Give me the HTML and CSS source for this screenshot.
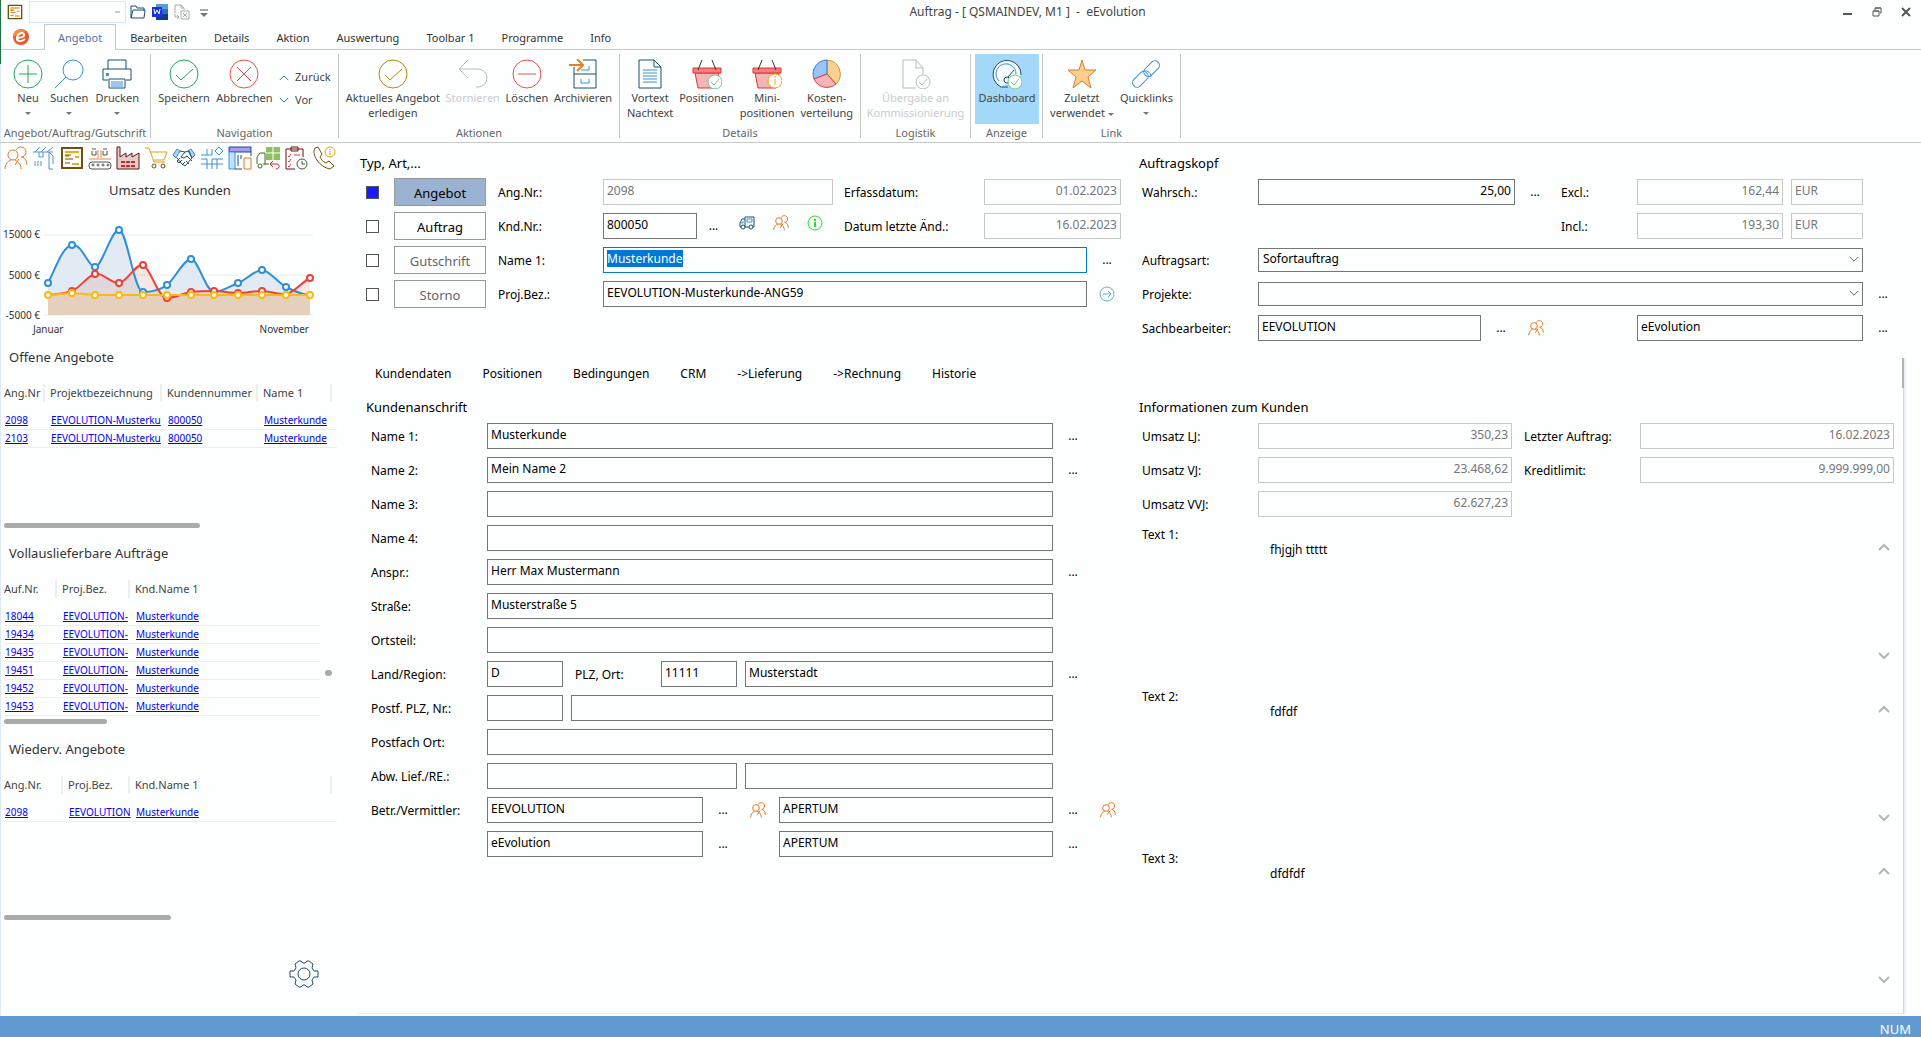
FILE: index.html
```html
<!DOCTYPE html>
<html lang="de">
<head>
  <meta charset="UTF-8">
  <meta name="viewport" content="width=device-width, initial-scale=1.0">
  <title>Auftrag - [ QSMAINDEV, M1 ] - eEvolution</title>
  <link rel="stylesheet" href="styles.css">
</head>
<body>
  <!-- Shared icons -->
  <svg class="sprite" aria-hidden="true">
    <symbol id="people" viewBox="0 0 24 24">
      <circle cx="9" cy="9" r="5"/><path d="M1 23c0-5 3-8 6-9M11 14c4 2 6 5 6 9M12 4c1-2 3-3 5-3 3 0 5 2 5 5s-2 5-5 5M18 11c3 1 5 4 5 8M15 13l-4 6"/>
    </symbol>
    <symbol id="form" viewBox="0 0 24 24">
      <path d="M2 2h20v20H2z" stroke="#6b5010" stroke-width="2"/><path d="M5 6h14M15 11h4M12 18h7M5 10h4" stroke="#f5a623" stroke-width="2"/><path d="M5 9h6M5 13h8M5 17h5" stroke="#6b5010"/>
    </symbol>
    <symbol id="basket" viewBox="0 0 30 30">
      <path d="M3 14h24l-3 15H6z" fill="#f3b5b5" stroke="#e03030"/><path d="M1 9h28v5H1z" fill="#f08080" stroke="#e03030"/><path d="M10 1L6 11M20 1l4 10" stroke="#333"/>
    </symbol>
    <symbol id="down" viewBox="0 0 12 8"><path d="M1 1l5 5 5-5"/></symbol>
    <symbol id="up" viewBox="0 0 12 8"><path d="M1 7l5-5 5 5"/></symbol>
  </svg>

  <header class="titlebar">
    <div class="quick">
      <svg class="icon16"><use href="#form"/></svg>
      <select class="quick-select" aria-label="Schnellauswahl"><option></option></select>
      <button class="plain" aria-label="Öffnen"><svg class="icon16" viewBox="0 0 16 16"><path d="M1 14V2h5l1 2h7v3M1 14h13l1-8H3z" stroke="#1b5266"/></svg></button>
      <button class="plain" aria-label="Word"><svg class="icon16" viewBox="0 0 16 16"><path fill="#5b9bd5" d="M4 0h12v5H4z"/><path fill="#2b6cc8" d="M4 5h12v5H4z"/><path fill="#123c88" d="M4 10h12v6H4z"/><path fill="#1733e6" d="M0 3h10v10H0z"/><path d="M2 5l1 5 2-4 2 4 1-5" stroke="#fff"/></svg></button>
      <button class="plain" aria-label="Export"><svg class="icon16" viewBox="0 0 16 16" stroke="#aaa"><path d="M1 9V1h6l3 3v2M7 1v3h3M7 7h8v8H7zM9 9l4 4M13 9l-4 4M1 10v3h4M3 11l2 2-2 2"/></svg></button>
      <button class="plain" aria-label="Anpassen"><svg class="icon16" viewBox="0 0 16 16"><path d="M4 6h8" stroke="#555"/><path d="M4 9h8l-4 4z" fill="#777"/></svg></button>
    </div>
    <h1 class="window-title">Auftrag - [ QSMAINDEV, M1 ] &nbsp;-&nbsp; eEvolution</h1>
    <div class="window-buttons">
      <button class="plain" aria-label="Minimieren"><svg viewBox="0 0 10 10"><path d="M0 7h9" stroke="#555" stroke-width="2"/></svg></button>
      <button class="plain" aria-label="Wiederherstellen"><svg viewBox="0 0 10 10"><path d="M1 4h6v5H1zM3 3V1h6v5H8M3 1h6M1 4h6" stroke="#555"/></svg></button>
      <button class="plain" aria-label="Schließen"><svg viewBox="0 0 10 10"><path d="M1 1l8 8M9 1L1 9" stroke="#555" stroke-width="2"/></svg></button>
    </div>
  </header>

  <nav class="tabs">
    <svg class="logo" viewBox="0 0 18 18"><circle cx="9" cy="9" r="8" fill="#e8562a"/><path d="M1 9a8 8 0 0 1 13-6z" fill="#f0913a"/><path d="M5 10c5 0 8-2 7-4s-6-1-7 3 3 6 8 2" stroke="#fff" stroke-width="2"/></svg>
    <a class="tab active" href="#">Angebot</a>
    <a class="tab" href="#">Bearbeiten</a>
    <a class="tab" href="#">Details</a>
    <a class="tab" href="#">Aktion</a>
    <a class="tab" href="#">Auswertung</a>
    <a class="tab" href="#">Toolbar 1</a>
    <a class="tab" href="#">Programme</a>
    <a class="tab" href="#">Info</a>
  </nav>

  <div class="ribbon">
    <section class="group group-doc">
      <div class="group-items">
        <button class="tool"><svg viewBox="0 0 30 30" stroke="#21a95a"><circle cx="15" cy="15" r="14"/><path d="M15 6v18M6 15h18"/></svg>Neu<i class="caret"></i></button>
        <button class="tool"><svg viewBox="0 0 30 30" stroke="#3b8fd6"><circle cx="19" cy="11" r="10"/><path d="M12 18L1 29"/></svg>Suchen<i class="caret"></i></button>
        <button class="tool"><svg viewBox="0 0 30 30" stroke="#1b5266"><path d="M6 10V1h18v9M6 21H1V10h28v11h-5M7 20h16v9H7z"/><path d="M9 23h12M9 25h12M9 27h12" stroke="#3b8fd6"/><path d="M4 14h3v3H4z" fill="#3b8fd6" stroke="none"/></svg>Drucken<i class="caret"></i></button>
      </div>
      <h2 class="group-name">Angebot/Auftrag/Gutschrift</h2>
    </section>
    <section class="group group-nav">
      <div class="group-items">
        <button class="tool"><svg viewBox="0 0 30 30" stroke="#21a95a"><circle cx="15" cy="15" r="14"/><path d="M7 16l5 5L24 10"/></svg>Speichern</button>
        <button class="tool"><svg viewBox="0 0 30 30" stroke="#e8504a"><circle cx="15" cy="15" r="14"/><path d="M8 8l14 14M22 8L8 22"/></svg>Abbrechen</button>
        <div class="steps">
          <button class="step"><svg><use href="#up"/></svg>Zurück</button>
          <button class="step"><svg><use href="#down"/></svg>Vor</button>
        </div>
      </div>
      <h2 class="group-name">Navigation</h2>
    </section>
    <section class="group group-actions">
      <div class="group-items">
        <button class="tool"><svg viewBox="0 0 30 30" stroke="#b8860b"><circle cx="15" cy="15" r="14"/><path d="M7 16l5 5L24 10"/></svg>Aktuelles Angebot<br>erledigen</button>
        <button class="tool" disabled><svg viewBox="0 0 30 30" stroke="#bbb"><path d="M10 1L1 10l9 9M1 10h19a9 9 0 0 1 0 18h-2" /></svg>Stornieren</button>
        <button class="tool"><svg viewBox="0 0 30 30" stroke="#e8504a"><circle cx="15" cy="15" r="14"/><path d="M6 15h18"/></svg>Löschen</button>
        <button class="tool"><svg viewBox="0 0 30 30" stroke="#1b5266"><path d="M6 8v21h22V1H15M6 15h22"/><path d="M13 20v4h8v-4M21 7v4h-8" stroke="#3b8fd6"/><path d="M1 6h14M9 0l6 6-6 6" stroke="#e67e22" stroke-width="2"/></svg>Archivieren</button>
      </div>
      <h2 class="group-name">Aktionen</h2>
    </section>
    <section class="group group-details">
      <div class="group-items">
        <button class="tool"><svg viewBox="0 0 30 30" stroke="#1b5266"><path d="M4 1h15l7 7v21H4zM19 1v7h7"/><path d="M8 11h14M8 14h14M8 17h14M8 20h14M8 23h14" stroke="#3b8fd6"/></svg>Vortext<br>Nachtext</button>
        <button class="tool"><svg viewBox="0 0 30 30"><use href="#basket"/><circle cx="23" cy="23" r="7" fill="#fff" stroke="#6cc98a"/><path d="M19 23l3 3 5-6" stroke="#6cc98a"/></svg>Positionen</button>
        <button class="tool"><svg viewBox="0 0 30 30"><use href="#basket"/><circle cx="23" cy="22" r="7" fill="#fff" stroke="#f0a818"/><path d="M23 20v6M23 17v2" stroke="#f0a818"/></svg>Mini-<br>positionen</button>
        <button class="tool"><svg viewBox="0 0 30 30"><path d="M15 15V1a14 14 0 0 1 9 24z" fill="#f8d28c" stroke="#e08a3c"/><path d="M15 15L2 20A14 14 0 0 1 15 1z" fill="#9cc4f8" stroke="#2b7fd0"/><path d="M15 15l9 10a14 14 0 0 1-22-5z" fill="#f3b5b5" stroke="#e03c3c"/></svg>Kosten-<br>verteilung</button>
      </div>
      <h2 class="group-name">Details</h2>
    </section>
    <section class="group group-logistics">
      <div class="group-items">
        <button class="tool" disabled><svg viewBox="0 0 30 30" stroke="#bbb"><path d="M15 29H2V1h13l7 8v6M15 1v8h7"/><circle cx="22" cy="23" r="7"/><path d="M18 23l3 3 5-6"/></svg>Übergabe an<br>Kommissionierung</button>
      </div>
      <h2 class="group-name">Logistik</h2>
    </section>
    <section class="group group-view">
      <div class="group-items">
        <button class="tool pressed"><svg viewBox="0 0 30 30" stroke="#1b5266"><path d="M9 28a14 14 0 1 1 20-12M9 28h7" fill="#f4fafd"/><path d="M7 22a10 10 0 1 1 17-7" stroke="#3b8fd6"/><circle cx="15" cy="21" r="3"/><path d="M16 18l6-7"/><circle cx="23" cy="23" r="7" fill="#fff" stroke="#6cc98a"/><path d="M19 23l3 3 5-6" stroke="#6cc98a"/></svg>Dashboard</button>
      </div>
      <h2 class="group-name">Anzeige</h2>
    </section>
    <section class="group group-links">
      <div class="group-items">
        <button class="tool"><svg viewBox="0 0 30 30"><path d="M15 1l3 10h11l-8 7 3 11-9-7-9 7 3-11-8-7h11z" fill="#f9d08a" stroke="#e07b2a"/></svg>Zuletzt<br>verwendet <i class="caret"></i></button>
        <button class="tool"><svg viewBox="0 0 30 30" stroke="#3b8fd6"><rect x="12" y="5" width="18" height="9" rx="4" transform="rotate(-45 21 10)"/><rect x="0" y="16" width="18" height="9" rx="4" transform="rotate(-45 9 20)"/><path d="M11 13c4-3 9 0 9 5"/></svg>Quicklinks<i class="caret"></i></button>
      </div>
      <h2 class="group-name">Link</h2>
    </section>
  </div>

  <div class="workspace">
    <aside class="sidebar">
      <div class="shortcuts">
        <button class="plain" aria-label="Kunden"><svg class="orange"><use href="#people"/></svg></button>
        <button class="plain" aria-label="Kran"><svg viewBox="0 0 24 24" stroke="#5b93cc"><path d="M1 6h20M3 6l5-5M9 6l5-5M15 6l6-5M7 6v5h4V6M17 6v17h4M17 6l4 4v8M3 15v5M6 15v5M9 15v5"/></svg></button>
        <button class="plain" aria-label="Belege"><svg><use href="#form"/></svg></button>
        <button class="plain" aria-label="Produktion"><svg viewBox="0 0 24 24" stroke="#555"><rect x="1" y="16" width="22" height="7" rx="3"/><circle cx="5" cy="19" r="1"/><circle cx="10" cy="19" r="1"/><circle cx="15" cy="19" r="1"/><circle cx="20" cy="19" r="1"/><path d="M4 5v4h4V5M15 5v4h4V5M4 3h4M15 3h4"/><path d="M1 13h22M10 4v8M13 4v8" stroke="#e08a4c"/></svg></button>
        <button class="plain" aria-label="Fertigung"><svg viewBox="0 0 24 24"><path d="M1 23V1h3v10l6-4v4l6-4v4l7-4v16z" fill="#e3cccc" stroke="#6b1010"/><path d="M5 16h15M5 20h15" stroke="#c8281e" stroke-width="2" stroke-dasharray="4 1"/></svg></button>
        <button class="plain" aria-label="Einkauf"><svg viewBox="0 0 24 24" stroke="#e5a00d"><path d="M1 2h4l5 14h11M6 6h17l-3 8H9"/><circle cx="10" cy="20" r="2" stroke="#6b5010"/><circle cx="19" cy="20" r="2" stroke="#6b5010"/></svg></button>
        <button class="plain" aria-label="Partner"><svg viewBox="0 0 24 24" stroke="#1b5266"><path d="M1 9l4-6 3 2-4 7zM23 9l-4-6-3 2 4 7z" fill="#a6d4ee" stroke="#3b8fd6"/><path d="M8 5l5 1 4-1 3 7-7 8-3-2-5-6M13 6l-4 5 3 1 3-2 5 5M8 12l-3 3 2 2M7 17l3-3M10 19l3-3M14 15l3 3"/></svg></button>
        <button class="plain" aria-label="Lager"><svg viewBox="0 0 24 24" stroke="#3b8fd6"><path d="M7 3v6H1M12 3v6H7M1 13h6v10M12 23V13h11M12 18h11M17 13v10M1 18h6M12 18H7"/><path d="M19 1l4 4-4 4-4-4z"/></svg></button>
        <button class="plain" aria-label="Planung"><svg viewBox="0 0 24 24"><path d="M1 1h22v5H1z" fill="#a99cf0" stroke="#1b4a8c"/><path d="M1 6h6v17H1z" fill="#bfe4fa" stroke="#3b8fd6"/><path d="M23 6v4M7 23h7M10 9v11M13 9v4" stroke="#1b4a8c"/><path d="M16 12h7v11h-7z" stroke="#e07b2a"/></svg></button>
        <button class="plain" aria-label="Lieferung"><svg viewBox="0 0 24 24"><path d="M10 1h14v13H10z" fill="#8cc063"/><path d="M10 7h14M17 1v13" stroke="#fff"/><path d="M1 18v-7l3-4h5v12M7 18h6" stroke="#4a6b2a"/><circle cx="4" cy="20" r="2" stroke="#4a6b2a"/><path d="M14 18h7c3 0 3 5-1 5M17 15l-3 3 3 3" stroke="#c8281e"/></svg></button>
        <button class="plain" aria-label="Aufgaben"><svg viewBox="0 0 24 24" stroke="#6b1010"><path d="M11 23H2V3h17v8M7 1h7v4H7z"/><path d="M4 10l1 1 2-3M4 15l1 1 2-3M4 20l1 1 2-3M10 9h6" stroke="#e03c3c"/><circle cx="18" cy="18" r="5" stroke="#3f5d2c"/><path d="M18 15v3h3" stroke="#3f5d2c"/></svg></button>
        <button class="plain" aria-label="Telefon"><svg viewBox="0 0 24 24" stroke="#7a4f14"><path d="M3 2c-4 6 4 19 15 21l4-3-5-5-3 2c-3-1-5-4-6-6l2-3-4-7z"/><circle cx="18" cy="6" r="5" stroke="#e5a00d"/><path d="M18 3v1M18 5v4" stroke="#e5a00d"/></svg></button>
      </div>

      <h2 class="chart-title">Umsatz des Kunden</h2>
      <svg class="chart" viewBox="0 0 340 140" role="img" aria-label="Umsatz des Kunden">
        <path class="grid" d="M44 35h269M44 75h269M44 115h269"/>
        <path fill="#e2ebf4" d="M48 83C56 68 62 47 72 45S88 67 95 67S111 30 119 30S134 92 143 92S160 90 167 85S184 59 191 59S206 92 214 92S230 86 238 83S255 70 262 70S278 83 286 87S302 95 310 95V115H48z"/>
        <path fill="#c86450" fill-opacity=".14" d="M48 95C56 94 64 94 72 91S87 76 95 74S111 84 119 83S136 63 143 65S158 98 167 98S183 93 191 92S206 91 214 91S230 93 238 93S254 91 262 91S278 95 286 94S302 82 310 78V95z"/>
        <path fill="#e5d0bd" d="M48 95h262v20H48z"/>
        <g class="blue">
          <path d="M48 83C56 68 62 47 72 45S88 67 95 67S111 30 119 30S134 92 143 92S160 90 167 85S184 59 191 59S206 92 214 92S230 86 238 83S255 70 262 70S278 83 286 87S302 95 310 95"/>
          <circle cx="48" cy="83" r="3"/><circle cx="72" cy="45" r="3"/><circle cx="95" cy="67" r="3"/><circle cx="119" cy="30" r="3"/><circle cx="143" cy="92" r="3"/><circle cx="167" cy="85" r="3"/><circle cx="191" cy="59" r="3"/><circle cx="238" cy="83" r="3"/><circle cx="262" cy="70" r="3"/><circle cx="286" cy="87" r="3"/>
        </g>
        <g class="red">
          <path d="M48 95C56 94 64 94 72 91S87 76 95 74S111 84 119 83S136 63 143 65S158 98 167 98S183 93 191 92S206 91 214 91S230 93 238 93S254 91 262 91S278 95 286 94S302 82 310 78"/>
          <circle cx="72" cy="91" r="3"/><circle cx="95" cy="74" r="3"/><circle cx="119" cy="83" r="3"/><circle cx="143" cy="65" r="3"/><circle cx="167" cy="98" r="3"/><circle cx="191" cy="92" r="3"/><circle cx="214" cy="91" r="3"/><circle cx="238" cy="93" r="3"/><circle cx="262" cy="91" r="3"/><circle cx="310" cy="78" r="3"/>
        </g>
        <g class="yellow">
          <path d="M48 95L72 93L95 95H310"/>
          <circle cx="48" cy="95" r="3"/><circle cx="72" cy="93" r="3"/><circle cx="95" cy="95" r="3"/><circle cx="119" cy="95" r="3"/><circle cx="143" cy="95" r="3"/><circle cx="167" cy="95" r="3"/><circle cx="191" cy="95" r="3"/><circle cx="214" cy="95" r="3"/><circle cx="238" cy="95" r="3"/><circle cx="262" cy="95" r="3"/><circle cx="286" cy="95" r="3"/><circle cx="310" cy="95" r="3"/>
        </g>
        <g class="axis">
          <text x="40" y="38" text-anchor="end">15000 €</text>
          <text x="40" y="79" text-anchor="end">5000 €</text>
          <text x="40" y="119" text-anchor="end">-5000 €</text>
          <text x="33" y="133">Januar</text>
          <text x="309" y="133" text-anchor="end">November</text>
        </g>
      </svg>

      <section class="widget">
        <h2>Offene Angebote</h2>
        <table class="list">
          <colgroup><col class="w46"><col class="w117"><col class="w96"><col></colgroup>
          <thead><tr><th>Ang.Nr</th><th>Projektbezeichnung</th><th>Kundennummer</th><th>Name 1</th></tr></thead>
          <tbody>
            <tr><td><a href="#">2098</a></td><td><a href="#">EEVOLUTION-Musterku</a></td><td><a href="#">800050</a></td><td><a href="#">Musterkunde</a></td></tr>
            <tr><td><a href="#">2103</a></td><td><a href="#">EEVOLUTION-Musterku</a></td><td><a href="#">800050</a></td><td><a href="#">Musterkunde</a></td></tr>
          </tbody>
        </table>
        <div class="scrollbar long"></div>
      </section>

      <section class="widget">
        <h2>Vollauslieferbare Aufträge</h2>
        <div class="scroll-area">
          <table class="list">
            <colgroup><col class="w58"><col class="w73"><col></colgroup>
            <thead><tr><th>Auf.Nr.</th><th>Proj.Bez.</th><th class="last">Knd.Name 1</th></tr></thead>
            <tbody>
              <tr><td><a href="#">18044</a></td><td><a href="#">EEVOLUTION-</a></td><td><a href="#">Musterkunde</a></td></tr>
              <tr><td><a href="#">19434</a></td><td><a href="#">EEVOLUTION-</a></td><td><a href="#">Musterkunde</a></td></tr>
              <tr><td><a href="#">19435</a></td><td><a href="#">EEVOLUTION-</a></td><td><a href="#">Musterkunde</a></td></tr>
              <tr><td><a href="#">19451</a></td><td><a href="#">EEVOLUTION-</a></td><td><a href="#">Musterkunde</a></td></tr>
              <tr><td><a href="#">19452</a></td><td><a href="#">EEVOLUTION-</a></td><td><a href="#">Musterkunde</a></td></tr>
              <tr><td><a href="#">19453</a></td><td><a href="#">EEVOLUTION-</a></td><td><a href="#">Musterkunde</a></td></tr>
            </tbody>
          </table>
          <div class="scroll-dot"></div>
        </div>
        <div class="scrollbar short"></div>
      </section>

      <section class="widget">
        <h2>Wiederv. Angebote</h2>
        <table class="list">
          <colgroup><col class="w64"><col class="w67"><col></colgroup>
          <thead><tr><th>Ang.Nr.</th><th>Proj.Bez.</th><th>Knd.Name 1</th></tr></thead>
          <tbody>
            <tr><td><a href="#">2098</a></td><td><a href="#">EEVOLUTION</a></td><td><a href="#">Musterkunde</a></td></tr>
          </tbody>
        </table>
        <div class="scrollbar medium"></div>
      </section>

      <button class="plain settings" aria-label="Einstellungen"><svg viewBox="0 0 30 30" stroke="#1b5266"><circle cx="15" cy="15" r="6"/><path d="M10 2h2l2 2h2l2-2h2l4 3-1 4 2 3h4v6h-4l-2 3 1 4-4 3h-2l-2-2h-2l-2 2h-2l-4-3 1-4-2-3H1v-6h4l2-3-1-4z"/></svg></button>
    </aside>

    <main class="main">
      <div class="columns">
        <section class="column">
          <h2 class="section-title outer">Typ, Art,...</h2>
          <div class="rows">
            <div class="row type-row">
              <input type="checkbox" class="check" id="isAngebot" aria-label="Angebot" checked>
              <button class="type selected">Angebot</button>
              <label for="angNr">Ang.Nr.:</label>
              <input class="field" id="angNr" value="2098" disabled>
              <label class="date-label" for="erfass">Erfassdatum:</label>
              <input class="field date" id="erfass" value="01.02.2023" disabled>
            </div>
            <div class="row type-row">
              <input type="checkbox" class="check" aria-label="Auftrag">
              <button class="type">Auftrag</button>
              <label for="kndNr">Knd.Nr.:</label>
              <div class="group-fields">
                <input class="field customer-no" id="kndNr" value="800050">
                <button class="plain more" aria-label="Kunde suchen">...</button>
                <button class="plain pick" aria-label="Lieferung"><svg class="icon16" viewBox="0 0 16 16"><path d="M6 2h9v10h-1M10 12H6M6 2v10M6 4H3L1 8v4h1" stroke="#1b5266"/><path d="M8 4h5v3H8zM4 6v2H2" stroke="#3b8fd6"/><circle cx="4" cy="12" r="2" stroke="#1b5266"/><circle cx="12" cy="12" r="2" stroke="#1b5266"/></svg></button>
                <button class="plain pick" aria-label="Kunde"><svg class="icon16 orange"><use href="#people"/></svg></button>
                <button class="plain pick" aria-label="Info"><svg class="icon16" viewBox="0 0 16 16" stroke="#2bdc2b"><circle cx="8" cy="8" r="7"/><path d="M8 7v5M8 4v2" stroke-width="2"/></svg></button>
              </div>
              <label class="date-label" for="geaendert">Datum letzte Änd.:</label>
              <input class="field date" id="geaendert" value="16.02.2023" disabled>
            </div>
            <div class="row type-row wide">
              <input type="checkbox" class="check" aria-label="Gutschrift">
              <button class="type dim">Gutschrift</button>
              <label for="name1">Name 1:</label>
              <input class="field" id="name1" value="Musterkunde">
              <button class="plain more" aria-label="Name suchen">...</button>
            </div>
            <div class="row type-row wide">
              <input type="checkbox" class="check" aria-label="Storno">
              <button class="type dim">Storno</button>
              <label for="projBez">Proj.Bez.:</label>
              <input class="field" id="projBez" value="EEVOLUTION-Musterkunde-ANG59">
              <button class="plain more" aria-label="Projekt öffnen"><svg class="icon16" viewBox="0 0 16 16" stroke="#6aaede"><circle cx="8" cy="8" r="7"/><path d="M4 8h8M9 5l3 3-3 3"/></svg></button>
            </div>
          </div>
        </section>

        <section class="column">
          <h2 class="section-title">Auftragskopf</h2>
          <div class="rows head-rows">
            <div class="row">
              <label for="wahrsch">Wahrsch.:</label>
              <input class="field number" id="wahrsch" value="25,00">
              <button class="plain more" aria-label="Wahrscheinlichkeit wählen">...</button>
              <label class="sum-label" for="excl">Excl.:</label>
              <input class="field sum" id="excl" value="162,44" disabled>
              <input class="field currency" aria-label="Währung Excl." value="EUR" disabled>
            </div>
            <div class="row">
              <span class="spacer"></span>
              <label class="sum-label" for="incl">Incl.:</label>
              <input class="field sum" id="incl" value="193,30" disabled>
              <input class="field currency" aria-label="Währung Incl." value="EUR" disabled>
            </div>
            <div class="row">
              <label for="art">Auftragsart:</label>
              <div class="select"><select id="art"><option>Sofortauftrag</option></select><svg><use href="#down"/></svg></div>
            </div>
            <div class="row has-more">
              <label for="projekte">Projekte:</label>
              <div class="select"><select id="projekte"><option></option></select><svg><use href="#down"/></svg></div>
              <button class="plain more" aria-label="Projekt wählen">...</button>
            </div>
            <div class="row has-more">
              <label for="bearbeiter">Sachbearbeiter:</label>
              <input class="field" id="bearbeiter" value="EEVOLUTION">
              <button class="plain more" aria-label="Sachbearbeiter wählen">...</button>
              <button class="plain person clerk" aria-label="Sachbearbeiter"><svg class="icon16 orange"><use href="#people"/></svg></button>
              <input class="field clerk-name" aria-label="Name Sachbearbeiter" value="eEvolution">
              <button class="plain more" aria-label="Name wählen">...</button>
            </div>
          </div>
        </section>
      </div>

      <div class="panel">
        <nav class="subtabs">
          <a href="#">Kundendaten</a><a href="#">Positionen</a><a href="#">Bedingungen</a><a href="#">CRM</a><a href="#">-&gt;Lieferung</a><a href="#">-&gt;Rechnung</a><a href="#">Historie</a>
        </nav>
        <div class="columns">
          <section class="column">
            <h2 class="section-title">Kundenanschrift</h2>
            <div class="rows address">
              <div class="row"><label for="aName1">Name 1:</label><input class="field" id="aName1" value="Musterkunde"><div class="tail"><button class="plain more" aria-label="Name 1 wählen">...</button></div></div>
              <div class="row"><label for="aName2">Name 2:</label><input class="field" id="aName2" value="Mein Name 2"><div class="tail"><button class="plain more" aria-label="Name 2 wählen">...</button></div></div>
              <div class="row"><label for="aName3">Name 3:</label><input class="field" id="aName3"><div class="tail"></div></div>
              <div class="row"><label for="aName4">Name 4:</label><input class="field" id="aName4"><div class="tail"></div></div>
              <div class="row"><label for="anspr">Anspr.:</label><input class="field" id="anspr" value="Herr Max Mustermann"><div class="tail"><button class="plain more" aria-label="Ansprechpartner wählen">...</button></div></div>
              <div class="row"><label for="strasse">Straße:</label><input class="field" id="strasse" value="Musterstraße 5"><div class="tail"></div></div>
              <div class="row"><label for="ortsteil">Ortsteil:</label><input class="field" id="ortsteil"><div class="tail"></div></div>
              <div class="row"><label for="land">Land/Region:</label><input class="field code" id="land" value="D"><label class="zip-label" for="plz">PLZ, Ort:</label><input class="field code" id="plz" value="11111"><input class="field next" aria-label="Ort" value="Musterstadt"><div class="tail"><button class="plain more" aria-label="Ort wählen">...</button></div></div>
              <div class="row"><label for="postf">Postf. PLZ, Nr.:</label><input class="field code" id="postf"><input class="field next" aria-label="Postfach Nr."><div class="tail"></div></div>
              <div class="row"><label for="postOrt">Postfach Ort:</label><input class="field" id="postOrt"><div class="tail"></div></div>
              <div class="row"><label for="abw">Abw. Lief./RE.:</label><input class="field delivery" id="abw"><input class="field next" aria-label="Abweichende Rechnung"><div class="tail"></div></div>
              <div class="row"><label for="betr">Betr./Vermittler:</label><input class="field agent" id="betr" value="EEVOLUTION"><button class="plain more" aria-label="Betreuer wählen">...</button><button class="plain person" aria-label="Betreuer"><svg class="icon16 orange"><use href="#people"/></svg></button><input class="field" aria-label="Vermittler" value="APERTUM"><div class="tail"><button class="plain more" aria-label="Vermittler wählen">...</button><button class="plain person" aria-label="Vermittler öffnen"><svg class="icon16 orange"><use href="#people"/></svg></button></div></div>
              <div class="row"><span class="label-gap"></span><input class="field agent" aria-label="Name Betreuer" value="eEvolution"><button class="plain more" aria-label="Name Betreuer wählen">...</button><span class="person"></span><input class="field" aria-label="Name Vermittler" value="APERTUM"><div class="tail"><button class="plain more" aria-label="Name Vermittler wählen">...</button></div></div>
            </div>
          </section>

          <section class="column">
            <h2 class="section-title">Informationen zum Kunden</h2>
            <div class="rows info-rows">
              <div class="row"><label for="lj">Umsatz LJ:</label><input class="field number" id="lj" value="350,23" disabled><label class="info-label" for="letzter">Letzter Auftrag:</label><input class="field number" id="letzter" value="16.02.2023" disabled></div>
              <div class="row"><label for="vj">Umsatz VJ:</label><input class="field number" id="vj" value="23.468,62" disabled><label class="info-label" for="kredit">Kreditlimit:</label><input class="field number" id="kredit" value="9.999.999,00" disabled></div>
              <div class="row"><label for="vvj">Umsatz VVJ:</label><input class="field number" id="vvj" value="62.627,23" disabled><span class="info-label"></span><span class="spacer"></span></div>
              <div class="note"><label for="text1">Text 1:</label><textarea id="text1">fhjgjh ttttt</textarea><div class="note-scroll"><svg><use href="#up"/></svg><svg><use href="#down"/></svg></div></div>
              <div class="note"><label for="text2">Text 2:</label><textarea id="text2">fdfdf</textarea><div class="note-scroll"><svg><use href="#up"/></svg><svg><use href="#down"/></svg></div></div>
              <div class="note"><label for="text3">Text 3:</label><textarea id="text3">dfdfdf</textarea><div class="note-scroll"><svg><use href="#up"/></svg><svg><use href="#down"/></svg></div></div>
            </div>
          </section>
        </div>
      </div>
    </main>
  </div>

  <footer class="statusbar">NUM</footer>

  <script>
    // Start with the customer name ready to be overwritten
    const nameField = document.getElementById('name1');
    nameField.focus();
    nameField.select();
  </script>
</body>
</html>
```
FILE: styles.css
```css
* {
  box-sizing: border-box;
}
body {
  margin: 0;
  min-height: 100vh;
  display: flex;
  flex-direction: column;
  font-family: "Noto Sans", "Open Sans", sans-serif;
  font-size: 12px;
  line-height: 16px;
  color: #000;
  background: #fdfefe linear-gradient(#217346 64px, #dfe8f5 64px) left top / 1px 100% no-repeat;
}
h1, h2 {
  margin: 0;
  font-weight: normal;
}
input, button, select, textarea {
  font: inherit;
  color: inherit;
}
svg {
  fill: none;
  flex-shrink: 0;
}
.sprite {
  position: absolute;
  width: 0;
  height: 0;
}
.icon16 {
  width: 16px;
  height: 16px;
}
.orange {
  stroke: #e07b2a;
}
#people * {
  vector-effect: non-scaling-stroke;
}
.plain {
  display: flex;
  align-items: center;
  justify-content: center;
  padding: 0;
  border: none;
  background: none;
}

/* Title bar */
.titlebar {
  display: flex;
  align-items: center;
  height: 24px;
  font-size: 11px;
  color: #444;
}
.quick {
  display: flex;
  align-items: center;
  gap: 6px;
  width: 212px;
  padding-left: 7px;
}
.quick-select {
  width: 99px;
  height: 22px;
  margin-right: -2px;
  border: 1px solid #dbe7f0;
  background: linear-gradient(#ccc, #ccc) right 5px center / 5px 2px no-repeat;
  appearance: none;
}
.window-title {
  flex: 1;
  text-align: center;
  font-size: 12px;
}
.window-buttons {
  display: flex;
  gap: 19px;
  padding-right: 10px;
}
.window-buttons svg {
  width: 10px;
  height: 10px;
}

/* Ribbon tabs */
.tabs {
  display: flex;
  height: 26px;
  margin-left: 1px;
  box-shadow: inset 0 -1px #c8c8c8;
  font-size: 11px;
}
.logo {
  width: 18px;
  height: 18px;
  margin: 4px 14px 0 11px;
}
.tab {
  padding: 6px 13px 0;
  color: #333;
  text-decoration: none;
}
.tab + .tab {
  margin-left: 1px;
}
.tab.active {
  padding-top: 5px;
  border: 1px solid #c8c8c8;
  border-bottom: none;
  background: #fdfefe;
  color: #5a72a8;
}

/* Ribbon */
.ribbon {
  display: flex;
  height: 93px;
  padding: 4px 0;
  border-bottom: 1px solid #c8c8c8;
  font-size: 11px;
  color: #444;
}
.group {
  display: flex;
  flex-direction: column;
  border-right: 1px solid #c8c8c8;
  padding: 0 4px;
}
.group-doc { width: 151px; }
.group-nav { width: 188px; }
.group-actions { width: 281px; }
.group-details { width: 241px; }
.group-logistics { width: 110px; }
.group-view { width: 72px; }
.group-links { width: 138px; }
.group-items {
  flex: 1;
  display: flex;
  justify-content: space-around;
  align-items: flex-start;
}
.group-doc .group-items {
  justify-content: space-between;
  padding: 0 7px 0 9px;
}
.tool {
  flex-shrink: 0;
  padding: 5px 0 0;
  border: none;
  background: none;
  text-align: center;
  line-height: 15px;
  white-space: nowrap;
}
.tool svg {
  display: block;
  width: 30px;
  height: 30px;
  margin: 0 auto 1px;
}
.tool:disabled {
  color: #ccc;
}
.tool.pressed {
  width: 64px;
  padding-bottom: 19px;
  background: #a3d8f8;
}
.caret {
  display: inline-block;
  border: 3px solid transparent;
  border-top-color: #777;
  border-bottom: none;
  vertical-align: middle;
}
.group-doc .caret,
.group-links .tool:last-child .caret {
  display: block;
  width: 6px;
  margin: 7px auto 0;
}
.steps {
  display: flex;
  flex-direction: column;
  gap: 7px;
  padding-top: 15px;
}
.step {
  display: flex;
  align-items: center;
  gap: 6px;
  padding: 0;
  border: none;
  background: none;
}
.step svg {
  width: 10px;
  height: 7px;
  stroke: #1b5266;
}
.group-name {
  font-size: 11px;
  line-height: 10px;
  text-align: center;
  white-space: nowrap;
  color: #666;
  align-self: center;
}

/* Sidebar */
.workspace {
  flex: 1;
  display: flex;
}
.sidebar {
  width: 357px;
  flex-shrink: 0;
  color: #333;
}
.shortcuts {
  display: flex;
  gap: 4px;
  padding: 3px 0 0 4px;
}
.shortcuts svg {
  width: 24px;
  height: 24px;
}
.chart-title {
  margin: 10px 17px 0 0;
  line-height: 20px;
  font-size: 13px;
  text-align: center;
}
.chart {
  display: block;
  width: 340px;
  height: 140px;
}
.grid {
  stroke: #eceaea;
}
.chart path {
  stroke-width: 2;
}
.chart .grid {
  stroke-width: 1;
}
.chart circle {
  fill: #fff;
  stroke-width: 2;
}
.blue { stroke: #2e8fd8; }
.red { stroke: #ee4036; }
.yellow { stroke: #fbb911; }
.axis {
  font-size: 10px;
  fill: #333;
}
.widget {
  display: flex;
  flex-direction: column;
  height: 196px;
  padding: 0 20px 8px 4px;
}
.widget h2 {
  padding-left: 5px;
  font-size: 13px;
  line-height: 34px;
}
.list {
  width: 100%;
  table-layout: fixed;
  border-collapse: collapse;
}
.list th {
  height: 37px;
  padding: 0;
  font-size: 11px;
  font-weight: normal;
  text-align: left;
  white-space: nowrap;
  color: #444;
  background: linear-gradient(#eee, #eee) right 5px center / 2px 18px no-repeat;
}
.list th.last {
  background: none;
}
.list td {
  height: 18px;
  padding: 0 0 0 1px;
  overflow: hidden;
  border-bottom: 1px solid #eee;
  font-size: 10px;
  line-height: 16px;
  white-space: nowrap;
}
.list a {
  color: #00f;
}
.w46 { width: 46px; }
.w58 { width: 58px; }
.w64 { width: 64px; }
.w67 { width: 67px; }
.w73 { width: 73px; }
.w96 { width: 96px; }
.w117 { width: 117px; }
.scroll-area {
  display: flex;
  align-items: flex-end;
  gap: 5px;
}
.scroll-dot {
  flex-shrink: 0;
  width: 7px;
  height: 6px;
  margin: 0 5px 40px 0;
  border-radius: 3px;
  background: #aaa;
}
.scrollbar {
  height: 5px;
  margin-top: auto;
  border-radius: 3px;
  background: #aaa;
}
.scrollbar.long { width: 59%; }
.scrollbar.short { width: 31%; }
.scrollbar.medium { width: 50%; }
.settings {
  margin: 31px 38px 0 auto;
}
.settings svg {
  width: 30px;
  height: 30px;
}

/* Form */
.main {
  flex: 1;
  display: flex;
  flex-direction: column;
  padding: 9px 18px 2px 0;
}
.columns {
  display: grid;
  grid-template-columns: 1fr 1fr;
}
.section-title {
  padding-left: 9px;
  margin-bottom: 4px;
  font-size: 13px;
  line-height: 22px;
}
.section-title.outer {
  padding-left: 3px;
}
.rows {
  display: flex;
  flex-direction: column;
  gap: 6px;
}
.row {
  display: flex;
  align-items: center;
  height: 28px;
  padding: 0 9px 0 12px;
}
.row label,
.label-gap {
  flex-shrink: 0;
  width: 116px;
  padding-top: 2px;
}
.field {
  flex: 1;
  min-width: 0;
  height: 26px;
  padding: 0 3px 3px;
  border: 1px solid #767676;
  border-radius: 0;
  background: transparent;
}
.field:focus {
  outline: none;
  border-color: #0078d7;
}
.field:disabled {
  border-color: #c8c8c8;
  color: #767676;
}
.field::selection {
  background: #0078d7;
  color: #fff;
}
.number,
.date,
.sum {
  text-align: right;
}
.more {
  flex-shrink: 0;
  width: 40px;
}
.spacer {
  flex: 1;
  padding: 0 4px;
}

/* Document type rows */
.type-row {
  padding-left: 9px;
}
.type-row.wide {
  padding-right: 3px;
}
.check {
  width: 13px;
  height: 13px;
  margin: 0 15px 0 0;
  border: 1px solid #555;
  background: #fff;
  appearance: none;
}
.check:checked {
  background: #1a1aff;
}
.type {
  width: 92px;
  height: 28px;
  padding: 2px 0 0;
  border: 1px solid #999;
  background: #fdfefe;
  font-size: 13px;
}
.type.selected {
  background: #9bb2d2;
}
.type.dim {
  color: #666;
}
.type-row label {
  width: 117px;
  padding-left: 12px;
}
.type-row .date-label {
  width: 151px;
  padding-left: 11px;
}
.field.date {
  flex: 0 0 137px;
}
.group-fields {
  flex: 1;
  display: flex;
  align-items: center;
}
.field.customer-no {
  flex: 0 0 94px;
}
.group-fields .more {
  width: 33px;
}
.pick {
  width: 34px;
  padding-bottom: 6px;
}

/* Order head */
.head-rows .row {
  padding-right: 40px;
}
.head-rows .has-more {
  padding-right: 0;
}
.row .sum-label {
  width: 82px;
  padding-left: 6px;
}
.field.sum {
  flex: 0 0 146px;
}
.field.currency {
  flex: 0 0 72px;
  margin-left: 8px;
}
.select {
  flex: 1;
  position: relative;
}
.select select {
  display: block;
  width: 100%;
  height: 24px;
  padding: 0 4px 2px;
  border: 1px solid #767676;
  border-radius: 0;
  background: transparent;
  appearance: none;
}
.select svg {
  position: absolute;
  top: 8px;
  right: 4px;
  width: 10px;
  height: 7px;
  stroke: #444;
}
.person {
  flex-shrink: 0;
  width: 36px;
  justify-content: flex-start;
  padding-left: 7px;
}
.person.clerk {
  width: 116px;
}
.field.clerk-name {
  flex: 0 0 226px;
}

/* Customer panel */
.panel {
  position: relative;
  flex: 1;
  margin-top: 16px;
  border-bottom: 1px solid #eaeaea;
  box-shadow: 1px 0 #d8d4dc, 3px 0 #eceff6;
}
.panel::after {
  content: "";
  position: absolute;
  top: 0;
  right: -1px;
  width: 2px;
  height: 30px;
  background: #b4b0b4;
}
.subtabs {
  display: flex;
  gap: 31px;
  padding: 8px 0 8px 18px;
}
.subtabs a {
  color: #000;
  text-decoration: none;
}
.panel .columns {
  padding-top: 6px;
}
.address .row {
  padding: 0 0 0 14px;
}
.tail {
  display: flex;
  flex-shrink: 0;
  width: 77px;
}
.field.code {
  flex: 0 0 76px;
}
.row .zip-label {
  width: 98px;
  padding-left: 12px;
}
.field.next {
  margin-left: 8px;
}
.field.delivery {
  flex: 0 0 250px;
}
.field.agent {
  flex: 0 0 216px;
}
.row .info-label {
  width: 128px;
  padding-left: 12px;
}
.note {
  display: flex;
  height: 156px;
  padding: 0 9px 0 12px;
}
.note label {
  width: 116px;
  padding-top: 3px;
}
.note textarea {
  flex: 1;
  padding: 18px 12px;
  border: none;
  outline: none;
  resize: none;
  overflow: hidden;
  background: transparent;
}
.note-scroll {
  display: flex;
  flex-direction: column;
  justify-content: space-between;
  padding: 19px 4px 20px;
}
.note-scroll svg {
  width: 12px;
  height: 8px;
  stroke: #b4b4b4;
  stroke-width: 2;
}

.statusbar {
  height: 21px;
  padding: 4px 10px 0 0;
  overflow: hidden;
  background: #6199d1;
  color: #fff;
  font-size: 13px;
  line-height: 18px;
  text-align: right;
}
```
